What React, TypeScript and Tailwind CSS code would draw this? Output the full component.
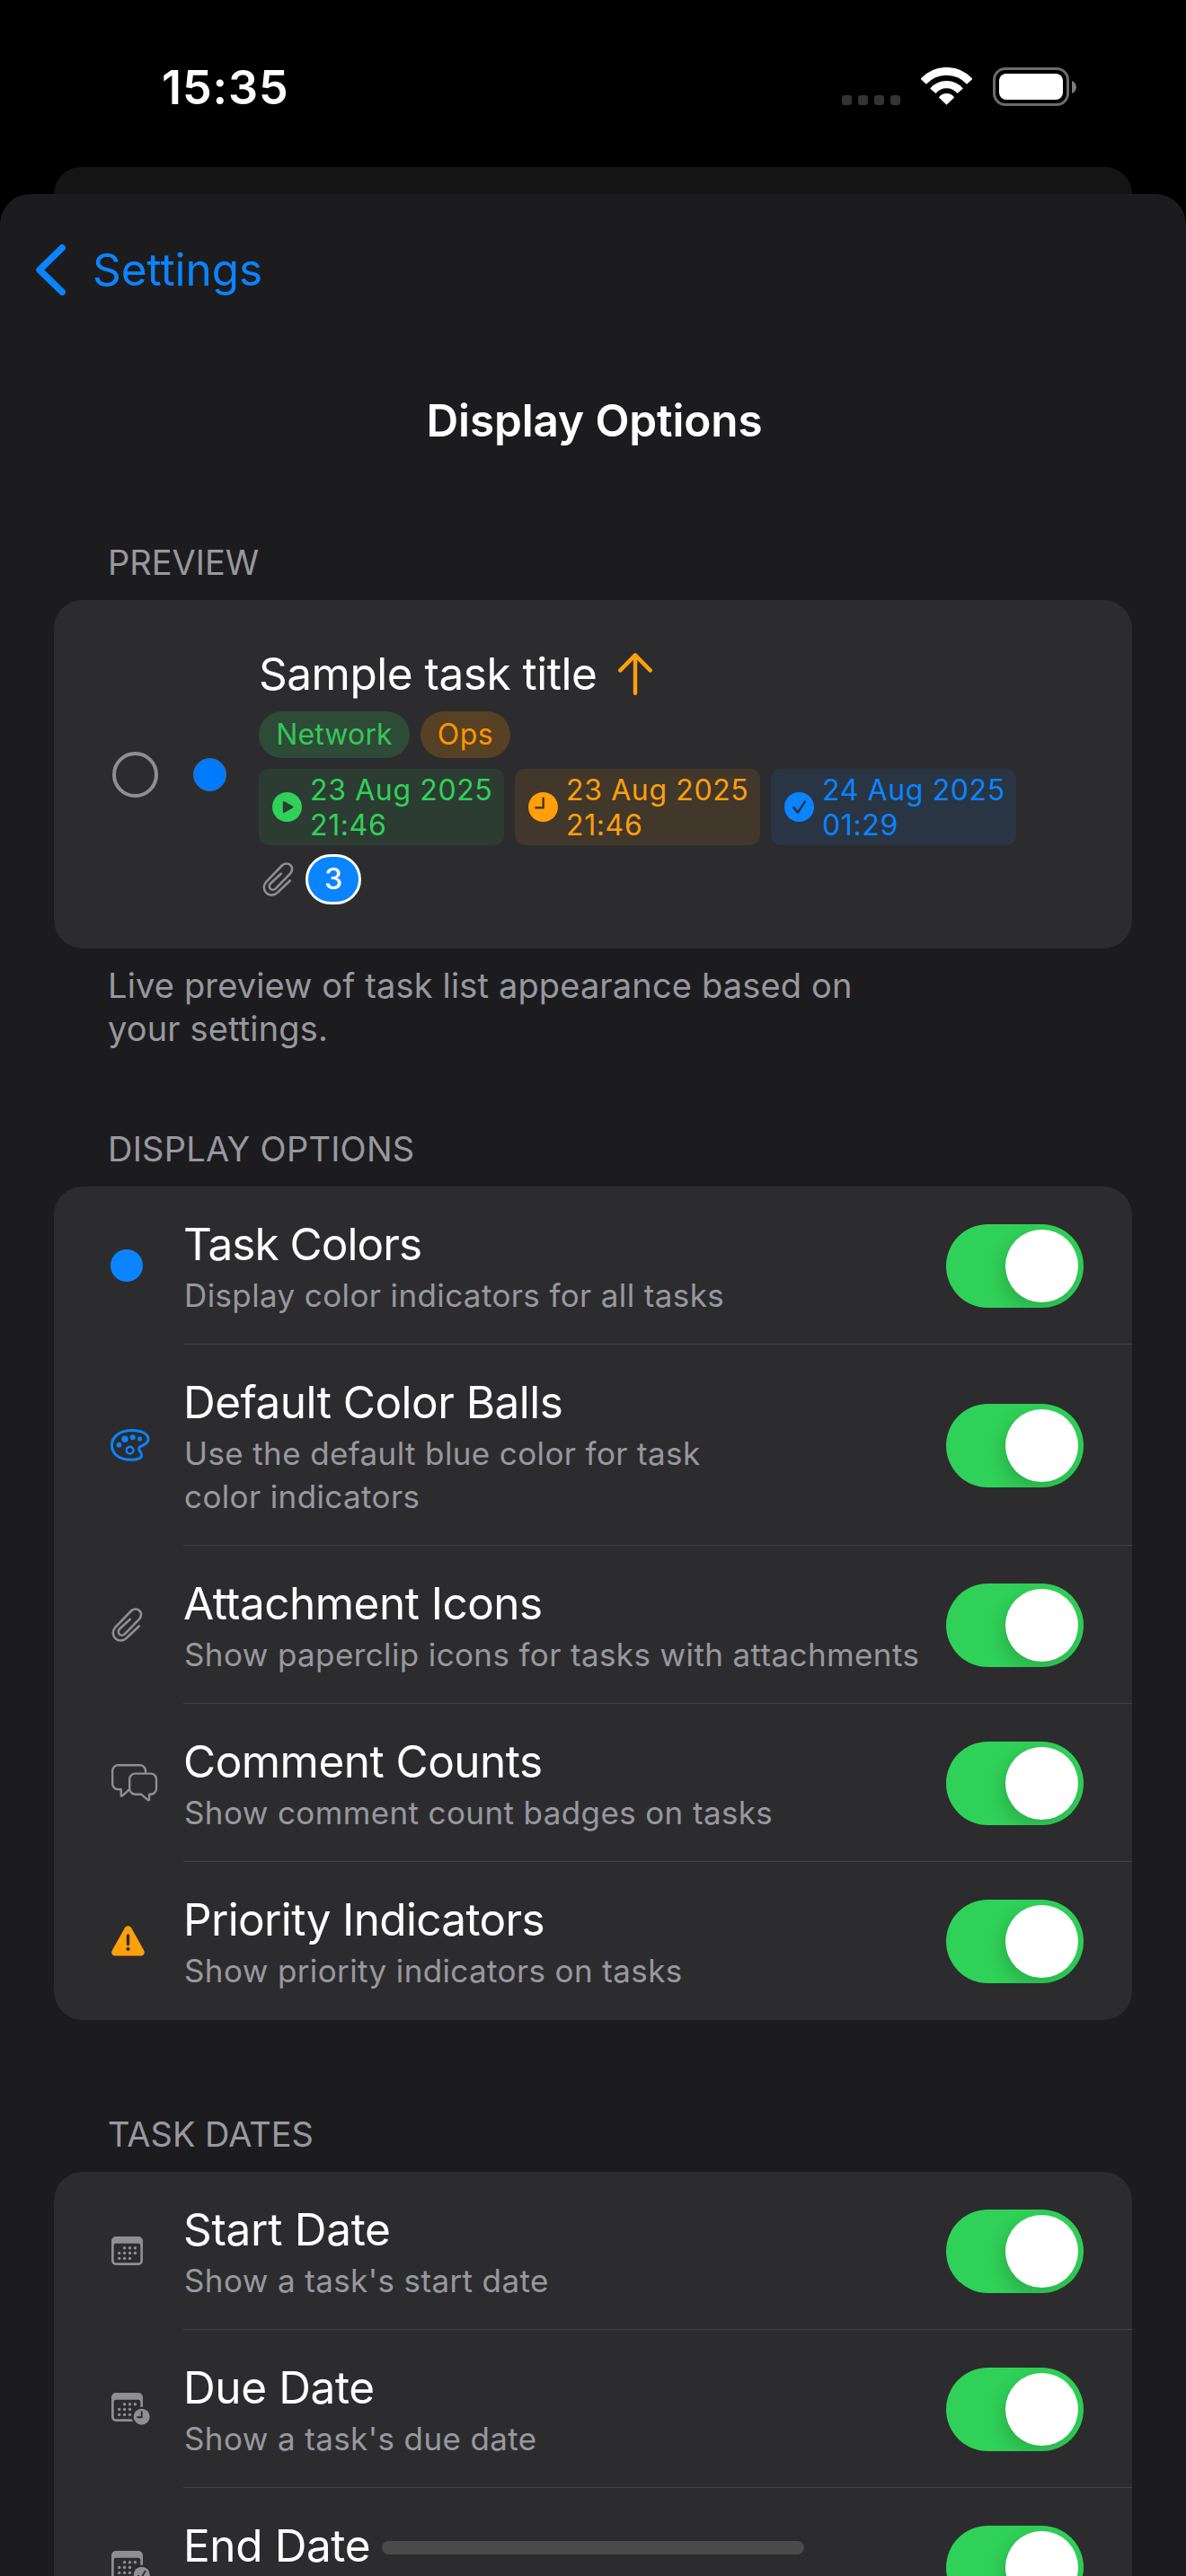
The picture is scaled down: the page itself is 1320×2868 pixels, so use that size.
import type { ReactNode } from "react";

function WifiIcon() {
  return (
    <svg width="57" height="42" viewBox="0 0 57 42" fill="none" stroke="#fff">
      <path d="M2.7 15.8A34.7 34.7 0 0 1 54.3 15.8" strokeWidth="8.7" />
      <path d="M13.3 26.2A19.9 19.9 0 0 1 43.7 26.2" strokeWidth="8.3" />
      <path d="M28.5 41.8 19.9 33.4A10.5 10.5 0 0 1 37.1 33.4Z" fill="#fff" stroke="none" />
    </svg>
  );
}

function Battery() {
  return (
    <div className="flex items-center gap-[3px]">
      <div className="h-[43px] w-[85px] rounded-[14px] border-[3px] border-[#6b6b6b] p-1">
        <div className="h-full w-full rounded-[8px] bg-white" />
      </div>
      <svg width="5" height="14" viewBox="0 0 5 14">
        <path d="M0 0C2.8 1.2 5 3.6 5 7S2.8 12.8 0 14Z" fill="#7d7d7d" />
      </svg>
    </div>
  );
}

function PaperclipIcon() {
  return (
    <svg width="35" height="38" viewBox="0 0 35 38" fill="none" stroke="#8e8e93" strokeWidth="2.6" strokeLinecap="round">
      <path d="M30.8 20.5 17.3 33.3C13.6 37 8.2 37.6 4.6 34.2 0.9 30.6 0.8 25.5 4.5 21.6L21.5 4C24.5 1 28.8.8 31.3 3.2 33.8 5.7 33.6 9.8 30.8 12.8L15 29.2C13.2 31 10.6 31.2 9 29.6 7.3 28 7.4 25.4 9.2 23.5L20.8 12.8" />
    </svg>
  );
}

function PaletteIcon() {
  return (
    <svg width="44" height="36" viewBox="0 0 44 36" fill="none" stroke="#0a84ff">
      <path
        strokeWidth="3"
        strokeLinejoin="round"
        d="M22.5 34.3C10 34.3 1.5 28 1.5 18 1.5 8 11 1.5 24 1.5 35 1.5 42 5.5 42 11.5 42 15.5 38 17.5 34 19.2 31 20.6 31 22.5 33 25 35.5 28.5 35.5 31.5 31 33.2 28.5 34.2 25.5 34.3 22.5 34.3Z"
      />
      <circle cx="21.6" cy="23.7" r="3.9" strokeWidth="2.4" />
      <g fill="#0a84ff" stroke="none">
        <circle cx="9.4" cy="17.7" r="2.9" />
        <circle cx="16" cy="11.3" r="3.7" />
        <circle cx="24.7" cy="9.3" r="3" />
        <circle cx="32.6" cy="11" r="2.5" />
      </g>
    </svg>
  );
}

function CommentsIcon() {
  return (
    <svg width="52" height="42" viewBox="0 0 52 42" fill="none" stroke="#8e8e93" strokeWidth="2.4" strokeLinejoin="round">
      <path d="M38 10V7.5A6.3 6.3 0 0 0 31.7 1.2H7.5A6.3 6.3 0 0 0 1.2 7.5V22A6.3 6.3 0 0 0 7.5 28.3H10.7V34.8C10.7 35.7 11.5 35.9 12.1 35.4L19.8 28.5" />
      <path d="M26.5 10.6H43.7A6.3 6.3 0 0 1 50 16.9V27.5A6.3 6.3 0 0 1 43.7 33.8H42.1V39.4C42.1 40.3 41.2 40.5 40.5 39.9L33.4 33.8H26.5A6.3 6.3 0 0 1 20.2 27.5V16.9A6.3 6.3 0 0 1 26.5 10.6Z" />
    </svg>
  );
}

function WarningIcon() {
  return (
    <svg width="37" height="34" viewBox="0 0 37 34">
      <path d="M15 2.3C16.5-.5 20.6-.5 22.1 2.3L36.2 27.6C37.7 30.6 36 33.6 32.8 33.6H4.2C1 33.6-.7 30.6.8 27.6Z" fill="#ff9f0a" />
      <path d="M18.5 11V20.5" stroke="#2c2c2e" strokeWidth="3.4" strokeLinecap="round" />
      <circle cx="18.5" cy="26" r="2.1" fill="#2c2c2e" />
    </svg>
  );
}

type Badge = "none" | "clock" | "check";

const plainDots = [
  [14.6, 12.7], [20.5, 12.7], [26.4, 12.7],
  [8.7, 18.5], [14.6, 18.5], [20.5, 18.5], [26.4, 18.5],
  [8.7, 24.4], [14.6, 24.4], [20.5, 24.4],
];

function CalendarIcon({ badge }: { badge: Badge }) {
  const tall = badge !== "none";
  const dots = tall ? plainDots.filter(([x, y]) => !(x > 26 && y > 18)) : plainDots;
  return (
    <svg width={tall ? 43 : 35} height={tall ? 36 : 32} viewBox={tall ? "0 0 43 36" : "0 0 35 32"}>
      <path
        fill="#8e8e93"
        fillRule="evenodd"
        d="M5 0H30A5 5 0 0 1 35 5V27A5 5 0 0 1 30 32H5A5 5 0 0 1 0 27V5A5 5 0 0 1 5 0ZM5 7.8A2.3 2.3 0 0 0 2.7 10.1V27A2.3 2.3 0 0 0 5 29.3H30A2.3 2.3 0 0 0 32.3 27V10.1A2.3 2.3 0 0 0 30 7.8Z"
      />
      {dots.map(([x, y]) => (
        <circle key={`${x}-${y}`} cx={x} cy={y} r="1.7" fill="#8e8e93" />
      ))}
      {tall && (
        <>
          <circle cx="33.7" cy="26.7" r="11" fill="#2c2c2e" />
          <circle cx="33.7" cy="26.7" r="9" fill="#8e8e93" />
          <path
            d={badge === "clock" ? "M33.7 21.3V27.3H29" : "M30 27.8 32.6 31 37.6 22.8"}
            fill="none"
            stroke="#2c2c2e"
            strokeWidth="1.9"
            strokeLinecap="round"
            strokeLinejoin="round"
          />
        </>
      )}
    </svg>
  );
}

function SectionHeader({ children, className }: { children: ReactNode; className: string }) {
  return (
    <div className={`flex items-end pb-[18px] pl-[120px] ${className}`}>
      <h2 className="text-[38px] leading-[48px] text-[#98989f]">{children}</h2>
    </div>
  );
}

function Toggle() {
  return (
    <div className="mt-px flex h-[93px] w-[153px] shrink-0 items-center justify-end self-center overflow-hidden rounded-full bg-[#30d158] pr-1.5">
      <div className="size-[81px] rounded-full bg-white shadow-[-4px_8px_20px_rgba(0,0,0,0.16)]" />
    </div>
  );
}

function OptionRow({ icon, title, sub, last, titleClass = "tracking-[-0.53px]" }: {
  icon: ReactNode;
  title: string;
  sub?: string;
  last?: boolean;
  titleClass?: string;
}) {
  return (
    <div className="flex min-h-[176px] pl-[63px]">
      <div className="flex w-[81px] shrink-0 items-center">{icon}</div>
      <div className={`flex flex-1 pr-[54px] ${last ? "" : "border-b border-[#424245]"}`}>
        <div className="flex-1 pt-[34px] pb-[30px]">
          <div className={`text-[49.5px] leading-[60px] whitespace-nowrap text-white ${titleClass}`}>{title}</div>
          {sub && (
            <div className="mt-[3px] pl-px text-[35px] leading-[48px] tracking-[0.38px] whitespace-pre text-[#98989f]">{sub}</div>
          )}
        </div>
        <Toggle />
      </div>
    </div>
  );
}

function DateChip({ date, time, className, children }: {
  date: string;
  time: string;
  className: string;
  children: ReactNode;
}) {
  return (
    <div className={`flex h-[85px] w-[273px] items-center gap-[9px] rounded-[11px] pl-[15px] ${className}`}>
      <svg width="33" height="33" viewBox="0 0 33 33" fill="none" strokeLinecap="round" strokeLinejoin="round">
        <circle cx="16.5" cy="16.5" r="16.5" fill="currentColor" />
        {children}
      </svg>
      <div className="text-[32px] leading-[39px] tracking-[0.62px] whitespace-nowrap">
        <div>{date}</div>
        <div>{time}</div>
      </div>
    </div>
  );
}

export default function App() {
  return (
    <div className="relative flex h-[2868px] w-[1320px] flex-col overflow-hidden bg-black font-['Inter',sans-serif]">
      <header className="flex h-[186px] shrink-0 items-start justify-between pr-[122px] pl-[180px]">
        <div className="mt-[68px] text-[52px] leading-[60px] font-semibold tracking-[0.9px] text-white">15:35</div>
        <div className="mt-[75px] flex items-start">
          <div className="mt-[31px] mr-[23px] flex gap-[7px]">
            {[0, 1, 2, 3].map((i) => (
              <div key={i} className="size-[11px] rounded-[3px] bg-[#333333]" />
            ))}
          </div>
          <div className="mr-[23px]">
            <WifiIcon />
          </div>
          <Battery />
        </div>
      </header>

      <div className="mx-[60px] h-[30px] shrink-0 rounded-t-[30px] bg-[#141414]" />

      <main className="flex flex-1 flex-col rounded-t-[34px] bg-[#1c1c1e]">
        <nav className="flex h-[168px] shrink-0 items-center pl-10 text-[#0a84ff]">
          <svg width="33" height="57" viewBox="0 0 33 57" fill="none" stroke="currentColor" strokeWidth="7.4" strokeLinecap="round" strokeLinejoin="round">
            <path d="M29.2 3.8 4 28.5 29.2 53.2" />
          </svg>
          <span className="ml-[30px] text-[49.5px] leading-[60px] tracking-[-0.06px]">Settings</span>
        </nav>
        <h1 className="flex h-[168px] shrink-0 items-center justify-center pl-[3px] text-[49.5px] font-semibold tracking-[-0.12px] text-white">
          Display Options
        </h1>

        <SectionHeader className="h-[116px]">PREVIEW</SectionHeader>
        <section className="mx-[60px] flex h-[388px] shrink-0 rounded-[32px] bg-[#2c2c2e] pl-[65px]">
          <div className="size-[51px] self-center rounded-full border-[4.5px] border-[#8e8e93]" />
          <div className="ml-[39px] size-[37px] self-center rounded-full border border-[#3c6ea8] bg-[#007aff]" />
          <div className="ml-9 flex flex-col pt-[52px]">
            <div className="flex items-center">
              <span className="text-[49.5px] leading-[60px] tracking-[-0.49px] text-white">Sample task title</span>
              <svg className="ml-[24px]" width="38" height="47" viewBox="0 0 38 47" fill="none" stroke="#ff9f0a" strokeWidth="4.4" strokeLinecap="round" strokeLinejoin="round">
                <path d="M19 44.8V2.4M2.3 19.4 19 2.4 35.7 19.4" />
              </svg>
            </div>
            <div className="mt-3 flex gap-3 text-[32px] leading-[52px]">
              <div className="h-[52px] w-[168px] rounded-full bg-[#2e4b37] text-center tracking-[0.15px] text-[#34c759]">Network</div>
              <div className="h-[52px] w-[100px] rounded-full bg-[#564124] text-center tracking-[0.5px] text-[#ff9500]">Ops</div>
            </div>
            <div className="mt-3 flex gap-3">
              <DateChip date="23 Aug 2025" time="21:46" className="bg-[#2c3c32] text-[#30d158]">
                <path d="M13 11.2 22.2 16.5 13 21.8Z" fill="#2c3c32" stroke="#2c3c32" strokeWidth="2.4" />
              </DateChip>
              <DateChip date="23 Aug 2025" time="21:46" className="bg-[#41372b] text-[#ff9f0a]">
                <path d="M16.7 6.8V17.2H8.4" stroke="#41372b" strokeWidth="2.4" />
              </DateChip>
              <DateChip date="24 Aug 2025" time="01:29" className="bg-[#293543] text-[#0a84ff]">
                <path d="M10.4 17.2 14.9 22.6 22.9 10.6" stroke="#293543" strokeWidth="2.6" />
              </DateChip>
            </div>
            <div className="mt-2.5 flex items-center pl-1">
              <PaperclipIcon />
              <div className="ml-[13px] flex h-[56px] w-[62px] items-center justify-center rounded-full border-[3px] border-white bg-[#0a84ff] text-[32px] font-medium text-white">
                3
              </div>
            </div>
          </div>
        </section>
        <p className="mt-[17px] pl-[120px] text-[38px] leading-[48px] tracking-[0.15px] whitespace-pre text-[#98989f]">
          {"Live preview of task list appearance based on\nyour settings."}
        </p>

        <SectionHeader className="h-[152px] tracking-[0.24px]">DISPLAY OPTIONS</SectionHeader>
        <section className="mx-[60px] rounded-[32px] bg-[#2c2c2e]">
          <OptionRow
            icon={<div className="size-9 rounded-full bg-[#0a84ff]" />}
            title="Task Colors"
            titleClass="tracking-[-0.95px]"
            sub="Display color indicators for all tasks"
          />
          <OptionRow
            icon={<PaletteIcon />}
            title="Default Color Balls"
            sub={"Use the default blue color for task\ncolor indicators"}
          />
          <OptionRow icon={<div className="pl-px"><PaperclipIcon /></div>} title="Attachment Icons" sub="Show paperclip icons for tasks with attachments" />
          <OptionRow icon={<div className="pl-px"><CommentsIcon /></div>} title="Comment Counts" sub="Show comment count badges on tasks" />
          <OptionRow
            icon={<div className="pl-px"><WarningIcon /></div>}
            title="Priority Indicators"
            titleClass="tracking-[-0.66px]"
            sub="Show priority indicators on tasks"
            last
          />
        </section>

        <SectionHeader className="h-[169px]">TASK DATES</SectionHeader>
        <section className="mx-[60px] rounded-t-[32px] bg-[#2c2c2e]">
          <OptionRow
            icon={<div className="pl-px"><CalendarIcon badge="none" /></div>}
            title="Start Date"
            titleClass="tracking-[-0.3px]"
            sub="Show a task's start date"
          />
          <OptionRow
            icon={<div className="pl-px"><CalendarIcon badge="clock" /></div>}
            title="Due Date"
            titleClass="tracking-[-0.4px]"
            sub="Show a task's due date"
          />
          <OptionRow
            icon={<div className="pl-px"><CalendarIcon badge="check" /></div>}
            title="End Date"
            titleClass="tracking-[-0.4px]"
            last
          />
        </section>
      </main>

      <div className="absolute bottom-6 left-[425px] h-[15px] w-[470px] rounded-full bg-[#4b4b4c]" />
    </div>
  );
}
